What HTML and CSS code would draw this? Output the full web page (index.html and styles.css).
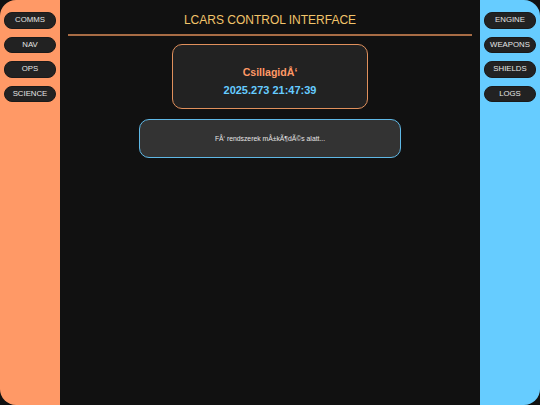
FILE: index.html
```html
<!DOCTYPE html>
<html lang="hu">
<head>
<meta charset="utf-8">
<title>LCARS</title>
<link rel="stylesheet" href="styles.css">
</head>
<body>
<div class="screen">
  <nav class="sidebar sidebar-left">
    <button class="btn">COMMS</button>
    <button class="btn">NAV</button>
    <button class="btn">OPS</button>
    <button class="btn">SCIENCE</button>
  </nav>
  <main class="main">
    <header class="header">
      <h1 class="title">LCARS CONTROL INTERFACE</h1>
    </header>
    <section class="panel panel-time">
      <div class="panel-label">CsillagidÅ‘</div>
      <div class="panel-value">2025.273 21:47:39</div>
    </section>
    <section class="panel panel-status">
      <div class="status-text">FÅ‘ rendszerek mÅ±kÃ¶dÃ©s alatt...</div>
    </section>
  </main>
  <nav class="sidebar sidebar-right">
    <button class="btn">ENGINE</button>
    <button class="btn">WEAPONS</button>
    <button class="btn">SHIELDS</button>
    <button class="btn">LOGS</button>
  </nav>
</div>
</body>
</html>
```

FILE: styles.css
```css
* { box-sizing: border-box; }
html, body {
  margin: 0;
  padding: 0;
  width: 540px;
  height: 405px;
  background: #111111;
  font-family: "Liberation Sans", Arial, sans-serif;
  overflow: hidden;
}
.screen {
  display: flex;
  width: 540px;
  height: 405px;
}
.sidebar {
  width: 60px;
  flex: none;
  display: flex;
  flex-direction: column;
  gap: 8px;
  padding: 12px 4px;
}
.sidebar-left {
  background: #ff9966;
  border-radius: 16px 0 0 16px;
}
.sidebar-right {
  background: #66ccff;
  border-radius: 0 16px 16px 0;
}
.btn {
  display: block;
  width: 100%;
  height: 16.5px;
  margin: 0;
  padding: 0;
  border: 1px solid #1a1a1a;
  border-radius: 8px;
  background: #222222;
  color: #e6e6e6;
  font-family: "Liberation Sans", Arial, sans-serif;
  font-size: 7.8px;
  line-height: 14px;
  text-align: center;
}
.main {
  flex: 1;
  display: flex;
  flex-direction: column;
  align-items: center;
  padding: 8px;
}
.header {
  align-self: stretch;
  padding: 5px 0 7px;
  border-bottom: 2px solid #a86c45;
  text-align: center;
}
.title {
  margin: 0;
  font-size: 12px;
  line-height: 14px;
  font-weight: normal;
  color: #f2c46a;
}
.panel {
  border-radius: 10px;
  text-align: center;
}
.panel-time {
  width: 196px;
  height: 65px;
  margin-top: 8px;
  padding-top: 21px;
  background: #222222;
  border: 1px solid #e0905c;
}
.panel-label {
  font-size: 10.6px;
  line-height: 13px;
  font-weight: bold;
  color: #ff9966;
}
.panel-value {
  margin-top: 5px;
  font-size: 11px;
  line-height: 13px;
  font-weight: bold;
  color: #66ccff;
}
.panel-status {
  width: 262px;
  height: 39px;
  margin-top: 10px;
  background: #333333;
  border: 1px solid #5fb8e6;
  display: flex;
  align-items: center;
  justify-content: center;
}
.status-text {
  font-size: 6.8px;
  line-height: 8px;
  color: #e6e6e6;
}
```
